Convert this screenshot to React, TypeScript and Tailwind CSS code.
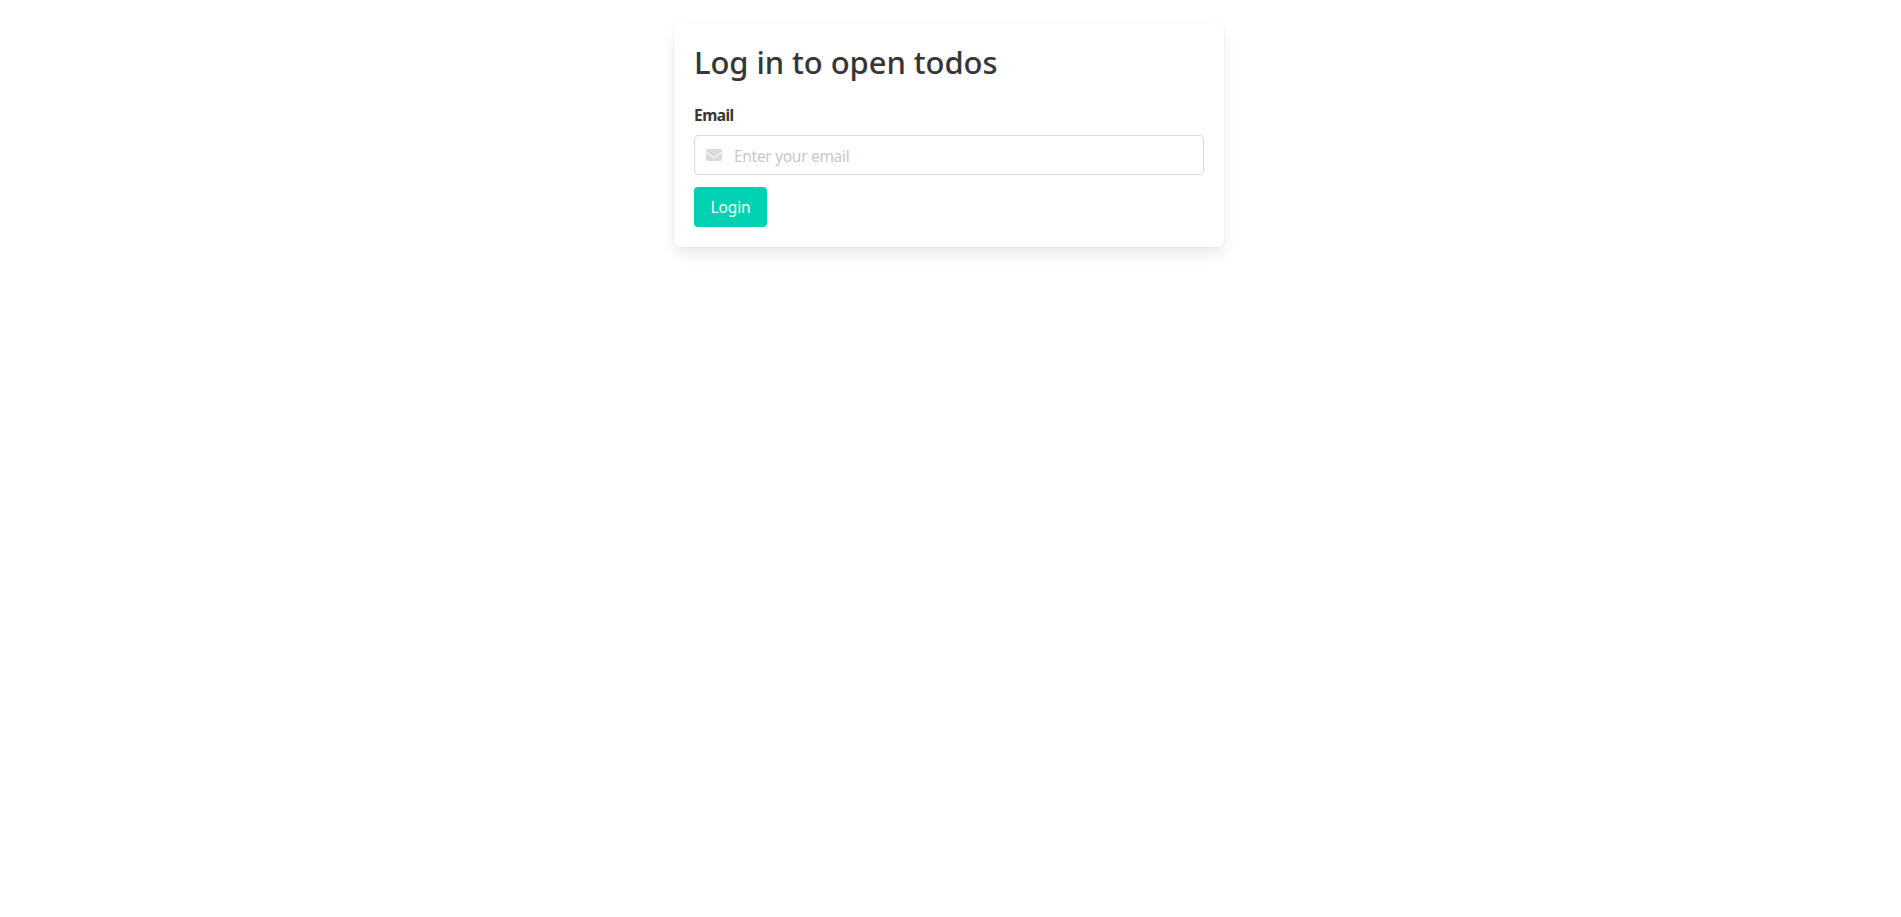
import { FaEnvelope } from "react-icons/fa6";

export default function App() {
  return (
    <main className="flex min-h-screen justify-center bg-white pt-[23px] pr-[3px] font-['Noto_Sans',sans-serif] text-base leading-6 text-[#4a4a4a]">
      <form className="h-56 w-[550px] rounded-md bg-white p-5 shadow-[0_8px_16px_-2px_rgba(10,10,10,0.1),0_0_0_1px_rgba(10,10,10,0.02)]">
        <h1 className="mb-6 h-9 pt-px text-[31px] font-medium leading-9 tracking-[-0.08px] whitespace-nowrap text-[#363636]">
          Log in to open todos
        </h1>
        <label
          htmlFor="email"
          className="mb-2 block text-[15.5px] font-bold leading-6 tracking-[-0.55px] text-[#363636]"
        >
          Email
        </label>
        <div className="mb-3 flex h-10 items-center rounded border border-[#dbdbdb]">
          <span className="-ml-px flex w-10 justify-center text-[#dbdbdb]">
            <FaEnvelope size={16} />
          </span>
          <input
            id="email"
            type="email"
            placeholder="Enter your email"
            className="flex-1 pt-0.5 text-[15.5px] tracking-[-0.3px] text-[#363636] outline-none placeholder:text-[#363636]/30"
          />
        </div>
        <button type="button" className="h-10 w-[73px] rounded bg-[#00d1b2] text-[15.5px] tracking-[-0.15px] text-white">
          Login
        </button>
      </form>
    </main>
  );
}
